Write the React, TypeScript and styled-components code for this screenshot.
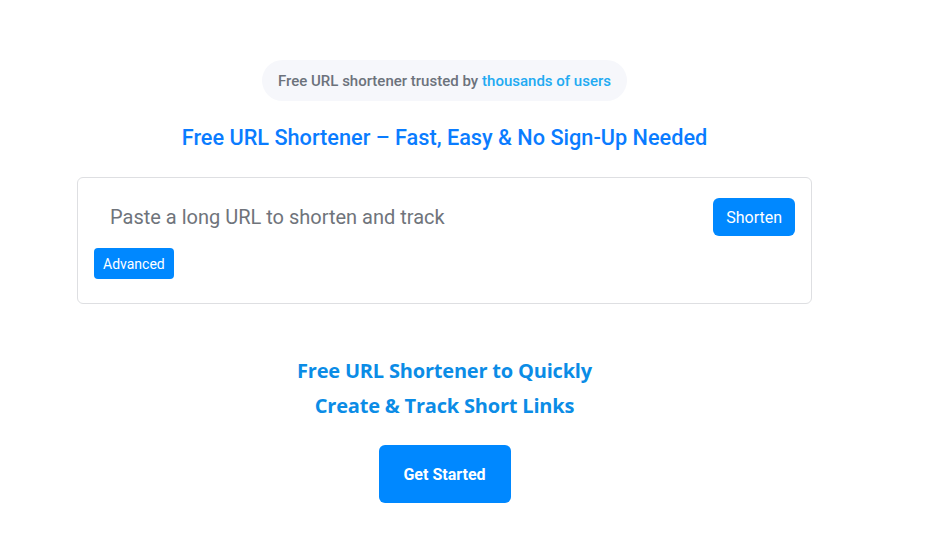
import React from 'react'
import styled, { createGlobalStyle } from 'styled-components'

const GlobalStyle = createGlobalStyle`
  body {
    margin: 0;
    background: #ffffff;
    font-family: Roboto, "Liberation Sans", sans-serif;
  }
`

export default function App() {
  return (
    <>
      <GlobalStyle />
      <Page>
        <Hero>
          <Badge>
            Free URL shortener trusted by <BadgeHighlight>thousands of users</BadgeHighlight>
          </Badge>
          <Title>Free URL Shortener – Fast, Easy &amp; No Sign-Up Needed</Title>
          <Card>
            <InputRow>
              <UrlInput placeholder="Paste a long URL to shorten and track" />
              <Button size="md">Shorten</Button>
            </InputRow>
            <Button size="sm">Advanced</Button>
          </Card>
          <Subtitle>
            Free URL Shortener to Quickly
            <br />
            Create &amp; Track Short Links
          </Subtitle>
          <Button size="lg">Get Started</Button>
        </Hero>
      </Page>
    </>
  )
}

const Page = styled.main`
  padding: 60px 0 0 77px;
`

const Hero = styled.section`
  width: 735px;
  display: flex;
  flex-direction: column;
  align-items: center;
`

const Badge = styled.div`
  height: 41px;
  padding: 0 16px;
  display: flex;
  align-items: center;
  border-radius: 21px;
  background: #f6f7fb;
  color: #6c727c;
  font-size: 15px;
  font-weight: 500;
`

const BadgeHighlight = styled.span`
  color: #22aaf2;
  margin-left: 4px;
`

const Title = styled.h1`
  margin: 23px 0 0;
  font-size: 21.7px;
  line-height: 28px;
  font-weight: 500;
  color: #0a7cff;
`

const Card = styled.div`
  align-self: stretch;
  margin-top: 25px;
  height: 127px;
  box-sizing: border-box;
  border: 1px solid #dedfe2;
  border-radius: 6px;
  padding: 20px 16px;
  display: flex;
  flex-direction: column;
  align-items: flex-start;
  gap: 12px;
`

const InputRow = styled.div`
  align-self: stretch;
  display: flex;
  align-items: center;
  gap: 12px;
`

const UrlInput = styled.input`
  flex: 1;
  height: 38px;
  border: none;
  outline: none;
  padding: 0 16px;
  font-family: Roboto, "Liberation Sans", sans-serif;
  font-size: 20px;
  color: #333;
  background: transparent;

  &::placeholder {
    color: #6f747b;
  }
`

type ButtonSize = 'sm' | 'md' | 'lg'

const sizes: Record<ButtonSize, string> = {
  sm: 'height: 31px; padding: 0 9px; font-size: 14px; font-weight: 400; border-radius: 4px;',
  md: 'height: 38px; padding: 0 13px; font-size: 16px; font-weight: 400; border-radius: 6px;',
  lg: 'height: 58px; width: 132px; margin-top: 22px; font-size: 16px; font-weight: 700; border-radius: 6px;',
}

const Button = styled.button<{ size: ButtonSize }>`
  border: none;
  background: #0088ff;
  color: #ffffff;
  font-family: Roboto, "Liberation Sans", sans-serif;
  cursor: pointer;
  flex-shrink: 0;
  ${(p) => sizes[p.size]}
`

const Subtitle = styled.h2`
  margin: 49px 0 0;
  text-align: center;
  font-family: "Open Sans", "Noto Sans", sans-serif;
  font-size: 20px;
  line-height: 35px;
  font-weight: 700;
  color: #0b8ce6;
  letter-spacing: -0.2px;
`
